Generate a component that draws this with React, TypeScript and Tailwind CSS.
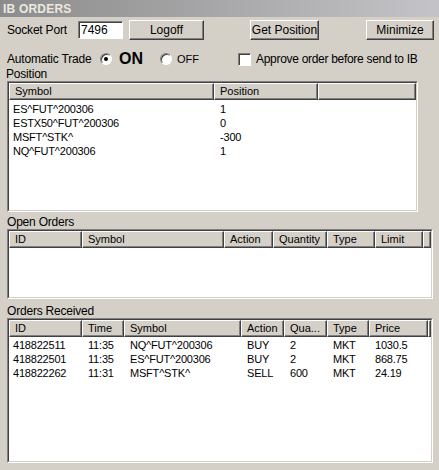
const font = { fontFamily: '"Liberation Sans", Arial, sans-serif' };

interface Col {
  label: string;
  w: string;
}

const POSITION_COLS: Col[] = [
  { label: 'Symbol', w: 'w-[205px]' },
  { label: 'Position', w: 'w-[104px]' },
];

const OPEN_COLS: Col[] = [
  { label: 'ID', w: 'w-[73px]' },
  { label: 'Symbol', w: 'w-[142px]' },
  { label: 'Action', w: 'w-[49px]' },
  { label: 'Quantity', w: 'w-[54px]' },
  { label: 'Type', w: 'w-[48px]' },
  { label: 'Limit', w: 'w-[48px]' },
];

const RECEIVED_COLS: Col[] = [
  { label: 'ID', w: 'w-[73px]' },
  { label: 'Time', w: 'w-[42px]' },
  { label: 'Symbol', w: 'w-[117px]' },
  { label: 'Action', w: 'w-[43px]' },
  { label: 'Qua...', w: 'w-[43px]' },
  { label: 'Type', w: 'w-[42px]' },
  { label: 'Price', w: 'w-[59px]' },
];

const POSITIONS = [
  ['ES^FUT^200306', '1'],
  ['ESTX50^FUT^200306', '0'],
  ['MSFT^STK^', '-300'],
  ['NQ^FUT^200306', '1'],
];

const RECEIVED = [
  ['418822511', '11:35', 'NQ^FUT^200306', 'BUY', '2', 'MKT', '1030.5'],
  ['418822501', '11:35', 'ES^FUT^200306', 'BUY', '2', 'MKT', '868.75'],
  ['418822262', '11:31', 'MSFT^STK^', 'SELL', '600', 'MKT', '24.19'],
];

function Button({ label, w }: { label: string; w: string }) {
  return (
    <div
      className={`${w} h-[20px] bg-[#d4d0c8] border border-t-white border-l-white border-b-[#404040] border-r-[#404040] shadow-[inset_-1px_-1px_0_#808080] flex items-center justify-center text-[12px] text-black`}
    >
      {label}
    </div>
  );
}

function Radio({ checked }: { checked: boolean }) {
  return (
    <div className="w-[12px] h-[12px] rounded-full bg-white border border-t-[#808080] border-l-[#808080] border-b-white border-r-white shadow-[inset_1px_1px_0_#404040] flex items-center justify-center shrink-0">
      {checked && <div className="w-[4px] h-[4px] rounded-full bg-black" />}
    </div>
  );
}

function ListView({
  cols,
  rows,
  width,
  height,
  padTop,
}: {
  cols: Col[];
  rows: string[][];
  width: string;
  height: string;
  padTop?: boolean;
}) {
  return (
    <div
      className={`${width} ${height} ml-[7px] border border-t-[#808080] border-l-[#808080] border-b-white border-r-white`}
    >
      <div className="w-full h-full border border-t-[#404040] border-l-[#404040] border-b-[#d4d0c8] border-r-[#d4d0c8] bg-white flex flex-col overflow-hidden">
        {/* Header */}
        <div className="flex h-[17px] shrink-0">
          {cols.map((c) => (
            <div
              key={c.label}
              className={`${c.w} shrink-0 h-full bg-[#d4d0c8] border border-t-white border-l-white border-b-[#404040] border-r-[#404040] shadow-[inset_-1px_-1px_0_#808080] pl-[5px] text-[11px] leading-[14px] text-black truncate`}
            >
              {c.label}
            </div>
          ))}
          <div className="flex-1 h-full bg-[#d4d0c8] border border-t-white border-l-white border-b-[#404040] border-r-[#404040] shadow-[inset_-1px_-1px_0_#808080]" />
        </div>
        {/* Rows */}
        <div className={padTop ? 'pt-[2px]' : 'pt-[1px]'}>
          {rows.map((r, i) => (
            <div key={i} className="flex h-[14px]">
              {r.map((cell, j) => (
                <div
                  key={j}
                  className={`${cols[j].w} shrink-0 ${j === 0 ? 'pl-[4px]' : 'pl-[6px]'} text-[11px] leading-[14px] text-black tracking-[-0.2px] whitespace-nowrap`}
                >
                  {cell}
                </div>
              ))}
            </div>
          ))}
        </div>
      </div>
    </div>
  );
}

export default function App() {
  return (
    <div className="w-[439px] h-[470px] bg-[#d4d0c8] text-black overflow-hidden" style={font}>
      {/* Title bar */}
      <div className="h-[17px] bg-gradient-to-r from-[#8c8c8c] to-[#c4c4c8] flex items-center pl-[3px]">
        <span className="text-[12px] font-bold text-[#ece8e0] tracking-[0.2px]">IB ORDERS</span>
      </div>

      {/* Row 1 */}
      <div className="mt-[3px] h-[20px] flex items-center pl-[7px] text-[12px]">
        <div className="w-[71px] tracking-[-0.2px]">Socket Port</div>
        <div className="w-[45px] h-[18px] bg-white border border-t-[#808080] border-l-[#808080] border-b-white border-r-white shadow-[inset_1px_1px_0_#404040] pl-[2px] text-[12px] leading-[16px]">
          7496
        </div>
        <div className="ml-[6px]">
          <Button label="Logoff" w="w-[75px]" />
        </div>
        <div className="ml-[46px]">
          <Button label="Get Position" w="w-[69px]" />
        </div>
        <div className="ml-[47px]">
          <Button label="Minimize" w="w-[68px]" />
        </div>
      </div>

      {/* Row 2 */}
      <div className="mt-[10px] h-[18px] flex items-center pl-[7px] text-[12px]">
        <div className="w-[93px] tracking-[-0.2px]">Automatic Trade</div>
        <Radio checked />
        <div className="ml-[7px] w-[24px] text-[16px] font-bold leading-[18px]">ON</div>
        <div className="ml-[17px]">
          <Radio checked={false} />
        </div>
        <div className="ml-[5px] w-[20px] text-[11px]">OFF</div>
        <div className="ml-[41px] w-[13px] h-[13px] bg-white border border-t-[#808080] border-l-[#808080] border-b-white border-r-white shadow-[inset_1px_1px_0_#404040] shrink-0" />
        <div className="ml-[5px] tracking-[-0.3px] whitespace-nowrap">Approve order before send to IB</div>
      </div>

      {/* Position */}
      <div className="h-[12px] pl-[6px] text-[12px] leading-[12px] tracking-[-0.2px]">Position</div>
      <div className="mt-[1px]">
        <ListView cols={POSITION_COLS} rows={POSITIONS} width="w-[411px]" height="h-[131px]" padTop />
      </div>

      {/* Open Orders */}
      <div className="mt-[4px] h-[12px] pl-[7px] text-[12px] leading-[12px] tracking-[-0.2px]">Open Orders</div>
      <div className="mt-[1px]">
        <ListView cols={OPEN_COLS} rows={[]} width="w-[426px]" height="h-[70px]" />
      </div>

      {/* Orders Received */}
      <div className="mt-[6px] h-[12px] pl-[7px] text-[12px] leading-[12px] tracking-[-0.2px]">Orders Received</div>
      <div className="mt-[1px]">
        <ListView cols={RECEIVED_COLS} rows={RECEIVED} width="w-[426px]" height="h-[145px]" />
      </div>
    </div>
  );
}
